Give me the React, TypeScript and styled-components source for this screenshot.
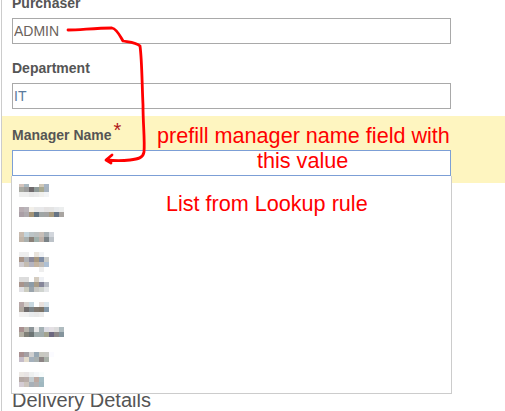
import styled, { createGlobalStyle } from 'styled-components';

interface INameMosaic {
  offset: number;
  firstRowHeight?: number;
  rows: string[][];
}

const CELL = 5;

const NAMES: INameMosaic[] = [
  {
    offset: 7,
    firstRowHeight: 3,
    rows: [
      ['#d4c4bd', '#a9b8c0', '#fff', '#fff', '#d0c8b8', '#a6b4c4'],
      ['#a8a9a2', '#9c9c9c', '#6f6a6c', '#8f9a98', '#a8a890', '#a6b2be'],
      ['#eee', '#eee', '#e8e8e8', '#ebebeb', '#f0f0ee', '#f2f4f6'],
    ],
  },
  {
    offset: 6,
    rows: [
      ['#b8adb2', '#b9b4b9', '#f2efe9', '#e8e8e8', '#e8e8ea', '#e4e2e2', '#e4e4e4', '#e8eaec', '#eceeee'],
      ['#aa9fa6', '#aeaaae', '#a49478', '#62727f', '#9fa5a5', '#a3a3a3', '#a69a80', '#667485', '#a8a4a0'],
    ],
  },
  {
    offset: 7,
    rows: [
      ['#c9bcb0', '#c4d4dc', '#bcc4c6', '#bcc0c0', '#c8bfb8', '#a8b0b4', '#d2d6dc'],
      ['#c0b4a8', '#aab0ae', '#8a8078', '#9fb0ac', '#bdb0a8', '#7a8286', '#bcc2c8'],
    ],
  },
  {
    offset: 3,
    rows: [
      ['#eee', '#eee', '#fff', '#eae4dc', '#f0f2f4', '#fff'],
      ['#a89488', '#aeb0b4', '#8c8a9a', '#a89880', '#7e8ca4', '#c8cac8'],
      ['#cfccd0', '#c4bcb0', '#b4b4c0', '#c4b4a0', '#c0bcb8', '#aec0d4'],
      ['#fff', '#fff', '#fff', '#fff', '#eee', '#fff'],
    ],
  },
  {
    offset: 4,
    rows: [
      ['#dcdcdc', '#dcdcdc', '#fff', '#d4ccc0', '#eef0f4', '#fff'],
      ['#a8948c', '#9c9c9c', '#8c9ca8', '#a89c88', '#86869a', '#b8bcc4'],
      ['#e0e0e4', '#ccccc0', '#9aa4ac', '#c8c8c4', '#d0d4d0', '#e4e6e8'],
    ],
  },
  {
    offset: 5,
    rows: [
      ['#b8a8a8', '#d4d0cc', '#c8d8e0', '#fff', '#e8e0dc', '#dce6ec'],
      ['#b0a8a0', '#706c6c', '#7c8488', '#807870', '#7c7468', '#8498a8'],
      ['#f2f0f0', '#f0f0f0', '#e8eaec', '#e8e8e8', '#ececec', '#fff'],
    ],
  },
  {
    offset: 6,
    rows: [
      ['#a89090', '#b8b4ac', '#8c9498', '#e8e8e8', '#a4b0b4', '#dcdce4', '#e4e0e4', '#dcdcdc', '#b0bcc0'],
      ['#b4b0a4', '#808078', '#6c7474', '#a0acac', '#a0acac', '#a4a490', '#6c6880', '#8c8888', '#84949c'],
    ],
  },
  {
    offset: 7,
    rows: [
      ['#a89090', '#a4a0a4', '#d0d0d0', '#98a8b4', '#c8c8c0', '#c8c8c4', '#fbfbff'],
      ['#c4bcc8', '#e4dccc', '#a4b0bc', '#a8b0b0', '#8c8484', '#a8b0a8', '#fff'],
    ],
  },
  {
    offset: 3,
    rows: [
      ['#ece8e4', '#e8e4e4', '#eef0f0', '#f4f6f8', '#f8fcfc'],
      ['#b4a8a4', '#b8aca8', '#c4ccd0', '#bca8a0', '#a4bcc4'],
      ['#d4ccd4', '#ccc4bc', '#a8b0b8', '#b4b0b0', '#a0b8c0'],
    ],
  },
];

function BlurredName({ rows, firstRowHeight = CELL }: INameMosaic) {
  const height = firstRowHeight + (rows.length - 1) * CELL;
  return (
    <svg width={rows[0].length * CELL} height={height} shapeRendering="crispEdges">
      {rows.map((row, r) =>
        row.map((fill, c) => (
          <rect
            key={`${r}-${c}`}
            x={c * CELL}
            y={r === 0 ? 0 : firstRowHeight + (r - 1) * CELL}
            width={CELL}
            height={r === 0 ? firstRowHeight : CELL}
            fill={fill}
          />
        )),
      )}
    </svg>
  );
}

function App() {
  return (
    <Page>
      <GlobalStyle />
      <FieldGroup>
        <Label $lineHeight={18}>Purchaser</Label>
        <TextInput readOnly value="ADMIN" $color="#6a625c" />
      </FieldGroup>
      <FieldGroup>
        <Label $lineHeight={18}>Department</Label>
        <TextInput readOnly value="IT" $color="#5a7a9c" />
      </FieldGroup>
      <HighlightBand>
        <Label $lineHeight={14}>
          Manager Name<Required>*</Required>
        </Label>
        <TextInput readOnly value="" $focused />
        <Dropdown>
          {NAMES.map((name, i) => (
            <Option key={i} $offset={name.offset}>
              <BlurredName {...name} />
            </Option>
          ))}
        </Dropdown>
      </HighlightBand>
      <SectionTitle>Delivery Details</SectionTitle>

      <Arrow width="505" height="411" viewBox="0 0 505 411" fill="none">
        <path
          d="M68 30 C80 30 95 28 112 28 C117 29 120 36 123 41 C128 42 136 42 140 46 C142 60 142 85 143 105 C143 125 145 140 144 152 C143 158 138 159 130 160 C122 161 115 161 107 160 M112 155 L106 160 L111 163"
          stroke="#f00"
          strokeWidth="2.8"
          strokeLinecap="round"
          strokeLinejoin="round"
        />
      </Arrow>
      <Note $left={157} $top={124}>prefill manager name field with</Note>
      <Note $left={257} $top={149}>this value</Note>
      <Note $left={166} $top={192}>List from Lookup rule</Note>
    </Page>
  );
}

export default App;

const GlobalStyle = createGlobalStyle`
  html, body {
    margin: 0;
    padding: 0;
    background: #fff;
    overflow: hidden;
  }
  * {
    box-sizing: border-box;
  }
`;

const Page = styled.div`
  position: relative;
  display: flex;
  flex-direction: column;
  width: 504px;
  height: 411px;
  margin-left: 1px;
  border-left: 1px solid #ccc;
  overflow: hidden;
  font-family: 'Liberation Sans', Arial, sans-serif;
`;

const FieldGroup = styled.div`
  display: flex;
  flex-direction: column;
  flex: none;
  margin-top: -6px;
  padding: 0 0 15px 10px;

  & + & {
    margin-top: 0;
    padding-bottom: 7px;
  }
`;

const Label = styled.label<{ $lineHeight: number }>`
  display: block;
  height: 24px;
  font-size: 14px;
  line-height: ${({ $lineHeight }) => $lineHeight}px;
  font-weight: 700;
  color: #555;
`;

const Required = styled.span`
  position: relative;
  top: -3px;
  margin-left: 2px;
  font-size: 20px;
  line-height: 14px;
  font-weight: 400;
  color: #b01818;
`;

const TextInput = styled.input<{ $color?: string; $focused?: boolean }>`
  display: block;
  flex: none;
  width: 439px;
  height: 26px;
  padding: 0 1px;
  border: 1px solid ${({ $focused }) => ($focused ? '#7c9fd6' : '#a9a9a9')};
  border-radius: 0;
  outline: none;
  background: #fff;
  font-family: inherit;
  font-size: 14px;
  color: ${({ $color }) => $color ?? '#555'};
`;

const HighlightBand = styled.div`
  position: relative;
  display: flex;
  flex-direction: column;
  flex: none;
  height: 67px;
  padding: 10px 0 7px 10px;
  background: #fef5c0;
`;

const Dropdown = styled.ul`
  position: absolute;
  top: 60px;
  left: 9px;
  display: flex;
  flex-direction: column;
  width: 441px;
  height: 218px;
  margin: 0;
  padding: 1px 0 0 7px;
  list-style: none;
  background: #fff;
  border: 1px solid #ccc;
  border-top: 0;
`;

const Option = styled.li<{ $offset: number }>`
  flex: none;
  height: 24px;
  padding-top: ${({ $offset }) => $offset}px;

  svg {
    display: block;
  }
`;

const SectionTitle = styled.h2`
  flex: none;
  margin: 206px 0 0;
  padding-left: 10px;
  font-size: 20px;
  line-height: 23px;
  font-weight: 400;
  color: #555;
`;

const Arrow = styled.svg`
  position: absolute;
  top: 0;
  left: -2px;
  pointer-events: none;
`;

const Note = styled.div<{ $left: number; $top: number }>`
  position: absolute;
  left: ${({ $left }) => $left - 2}px;
  top: ${({ $top }) => $top}px;
  font-size: 21.6px;
  line-height: 24px;
  white-space: nowrap;
  color: #f00;
`;
